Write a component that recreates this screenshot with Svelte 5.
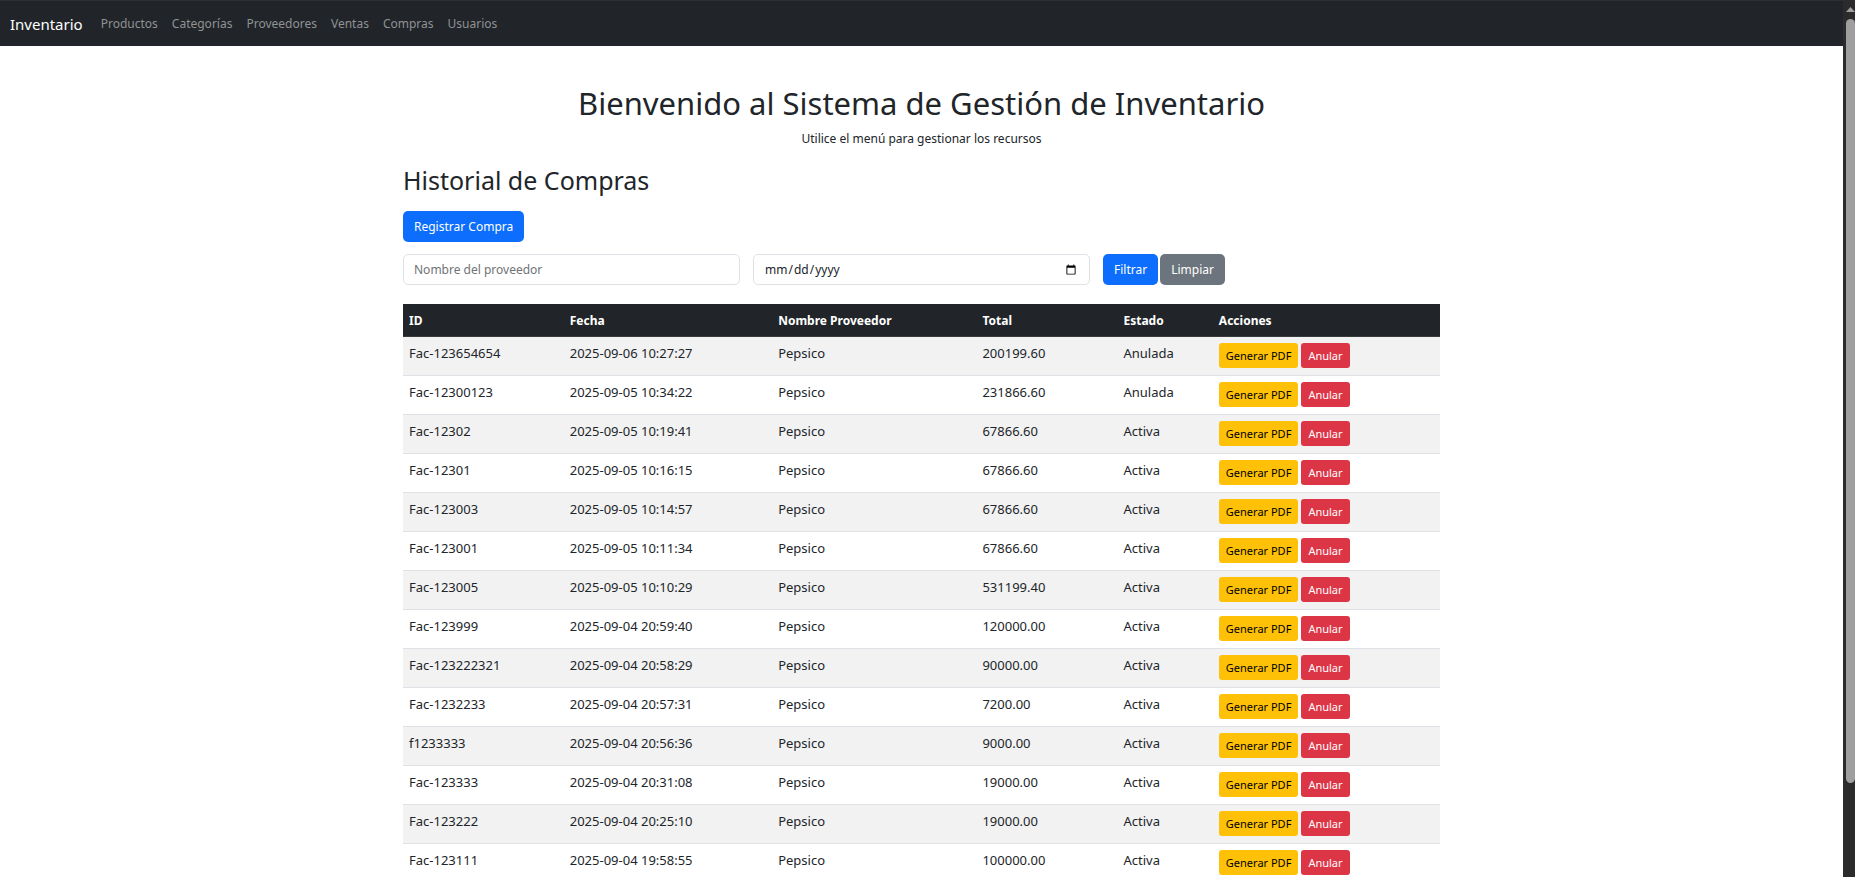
<script>
  const links = ['Productos', 'Categorías', 'Proveedores', 'Ventas', 'Compras', 'Usuarios'];
  const columns = ['ID', 'Fecha', 'Nombre Proveedor', 'Total', 'Estado', 'Acciones'];

  const purchases = [
    ['Fac-123654654', '2025-09-06 10:27:27', 'Pepsico', '200199.60', 'Anulada'],
    ['Fac-12300123', '2025-09-05 10:34:22', 'Pepsico', '231866.60', 'Anulada'],
    ['Fac-12302', '2025-09-05 10:19:41', 'Pepsico', '67866.60', 'Activa'],
    ['Fac-12301', '2025-09-05 10:16:15', 'Pepsico', '67866.60', 'Activa'],
    ['Fac-123003', '2025-09-05 10:14:57', 'Pepsico', '67866.60', 'Activa'],
    ['Fac-123001', '2025-09-05 10:11:34', 'Pepsico', '67866.60', 'Activa'],
    ['Fac-123005', '2025-09-05 10:10:29', 'Pepsico', '531199.40', 'Activa'],
    ['Fac-123999', '2025-09-04 20:59:40', 'Pepsico', '120000.00', 'Activa'],
    ['Fac-123222321', '2025-09-04 20:58:29', 'Pepsico', '90000.00', 'Activa'],
    ['Fac-1232233', '2025-09-04 20:57:31', 'Pepsico', '7200.00', 'Activa'],
    ['f1233333', '2025-09-04 20:56:36', 'Pepsico', '9000.00', 'Activa'],
    ['Fac-123333', '2025-09-04 20:31:08', 'Pepsico', '19000.00', 'Activa'],
    ['Fac-123222', '2025-09-04 20:25:10', 'Pepsico', '19000.00', 'Activa'],
    ['Fac-123111', '2025-09-04 19:58:55', 'Pepsico', '100000.00', 'Activa']
  ];

  let supplier = $state('');
  let date = $state('');

  function clearFilters() {
    supplier = '';
    date = '';
  }
</script>

<div class="shell">
  <div class="page">
    <nav class="navbar">
      <a class="brand" href="#inicio">Inventario</a>
      {#each links as link}
        <a class="nav-link" href="#{link.toLowerCase()}">{link}</a>
      {/each}
    </nav>

    <main class="container">
      <header class="welcome">
        <h1>Bienvenido al Sistema de Gestión de Inventario</h1>
        <p>Utilice el menú para gestionar los recursos</p>
      </header>

      <h2>Historial de Compras</h2>
      <button class="btn primary" type="button">Registrar Compra</button>

      <form class="filters" onsubmit={(e) => e.preventDefault()}>
        <input type="text" aria-label="Nombre del proveedor" placeholder="Nombre del proveedor" bind:value={supplier} />
        <input type="date" aria-label="Fecha" bind:value={date} />
        <div class="filter-actions">
          <button class="btn primary" type="submit">Filtrar</button>
          <button class="btn secondary" type="button" onclick={clearFilters}>Limpiar</button>
        </div>
      </form>

      <table>
        <colgroup>
          <col class="c-id" /><col class="c-date" /><col class="c-name" />
          <col class="c-total" /><col class="c-state" /><col />
        </colgroup>
        <thead>
          <tr>
            {#each columns as column}<th scope="col">{column}</th>{/each}
          </tr>
        </thead>
        <tbody>
          {#each purchases as purchase}
            <tr>
              {#each purchase as value}<td>{value}</td>{/each}
              <td class="actions-cell">
                <div class="row-actions">
                  <button class="btn small warning" type="button">Generar PDF</button>
                  <button class="btn small danger" type="button">Anular</button>
                </div>
              </td>
            </tr>
          {/each}
        </tbody>
      </table>
    </main>
  </div>

  <div class="scrollbar" aria-hidden="true">
    <svg width="9" height="5" viewBox="0 0 9 5"><path d="M0 5 4.500 0 9 5Z" fill="#9f9f9f" /></svg>
    <div class="thumb"></div>
    <div class="rest"></div>
  </div>
</div>

<style>
  :global(body) {
    margin: 0;
    background: #fff;
  }
  .shell {
    display: flex;
    height: 100vh;
    overflow: hidden;
    color: #212529;
    font: 400 12px/19px 'Noto Sans', 'Open Sans', sans-serif;
  }
  .page {
    flex: 1;
    min-width: 0;
    overflow: hidden;
  }
  .navbar {
    box-sizing: border-box;
    display: flex;
    align-items: center;
    height: 46px;
    padding: 0 10px;
    gap: 14px;
    border-top: 1px solid #303033;
    background: #212529;
  }
  .navbar a {
    text-decoration: none;
  }
  .brand {
    margin-right: 4px;
    color: #fff;
    font-size: 15px;
    line-height: 24px;
  }
  .nav-link {
    color: #909294;
  }
  .container {
    max-width: 1037px;
    margin: 0 auto;
    padding-top: 38px;
  }
  .welcome {
    text-align: center;
  }
  h1,
  h2,
  p {
    margin: 0;
    font-weight: 400;
  }
  h1 {
    font-size: 31px;
    line-height: 38px;
  }
  p {
    padding: 7px 0 17px;
  }
  h2 {
    font-size: 25px;
    line-height: 31px;
    padding-bottom: 15px;
  }
  .btn {
    box-sizing: border-box;
    height: 31px;
    padding: 0 11px;
    border: 0;
    border-radius: 5px;
    color: #fff;
    font: inherit;
    white-space: nowrap;
  }
  .primary {
    background: #0d6efd;
  }
  .secondary {
    background: #6c757d;
  }
  .filters {
    display: grid;
    grid-template-columns: repeat(3, 1fr);
    gap: 13px;
    margin: 12px 0 19px;
  }
  .filter-actions {
    display: flex;
    gap: 2px;
  }
  input {
    box-sizing: border-box;
    width: 100%;
    height: 31px;
    padding: 0 10px;
    border: 1px solid #dee2e6;
    border-radius: 5px;
    background: #fff;
    color: #212529;
    font: inherit;
  }
  input::placeholder {
    color: #6f7376;
  }
  table {
    width: 100%;
    border-collapse: separate;
    border-spacing: 0;
    table-layout: fixed;
  }
  .c-id {
    width: 15.5%;
  }
  .c-date {
    width: 20.1%;
  }
  .c-name {
    width: 19.7%;
  }
  .c-total {
    width: 13.6%;
  }
  .c-state {
    width: 9.2%;
  }
  th,
  td {
    padding: 7px 6px 6px;
    border-bottom: 1px solid #dee2e6;
    text-align: left;
    vertical-align: top;
  }
  td {
    font-size: 13px;
  }
  th {
    border-color: #373b3e;
    background: #212529;
    color: #fff;
    font-weight: 700;
  }
  tbody tr:nth-child(odd) {
    background: #f2f2f2;
  }
  .actions-cell {
    padding: 6px 6px 7px;
  }
  .row-actions {
    display: flex;
    gap: 3px;
  }
  .small {
    height: 25px;
    padding: 0 7px;
    border-radius: 3px;
    font-size: 11px;
  }
  .warning {
    background: #ffc107;
    color: #000;
  }
  .danger {
    background: #dc3545;
  }
  .scrollbar {
    box-sizing: border-box;
    display: flex;
    flex-direction: column;
    align-items: flex-end;
    width: 12px;
    padding-top: 7px;
    background: #2b2b2b;
  }
  .thumb {
    flex: 765;
    width: 9px;
    margin-top: 7px;
    border-radius: 5px;
    background: #9f9f9f;
  }
  .rest {
    flex: 94;
  }
</style>
